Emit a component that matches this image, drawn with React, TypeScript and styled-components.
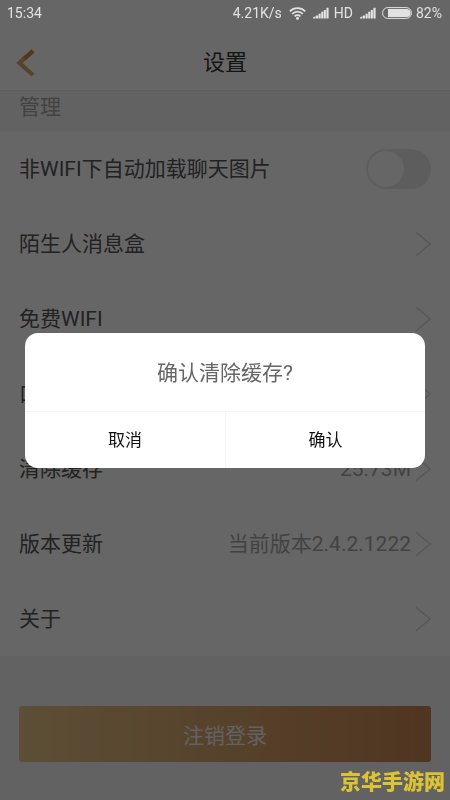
import React from "react";
import styled, { createGlobalStyle } from "styled-components";

const GlobalStyle = createGlobalStyle`
  * { box-sizing: border-box; }
  body {
    margin: 0;
    background: #f5f5f5;
    font-family: Roboto, "Noto Sans CJK SC", sans-serif;
  }
  button, input { font-family: inherit; margin: 0; }
`;

const Page = styled.div`
  min-height: 100vh;
  display: flex;
  flex-direction: column;
`;

const TopBar = styled.header`
  padding-top: 35px;
  background: #fff;
  border-bottom: 1px solid #e9e9e9;
`;

const TitleRow = styled.div`
  display: grid;
  grid-template-columns: 56px 1fr 56px;
  align-items: center;
  height: 55px;
`;

const Title = styled.h1`
  margin: 0;
  font-size: 22px;
  line-height: 32px;
  font-weight: 400;
  text-align: center;
  color: #333;
`;

const BackButton = styled.button`
  display: flex;
  padding: 0 0 0 16px;
  border: 0;
  background: none;
`;

const StatusBar = styled.div`
  position: fixed;
  inset: 0 0 auto 0;
  z-index: 3;
  display: flex;
  align-items: center;
  justify-content: space-between;
  height: 26px;
  padding: 0 8px 0 7px;
  font-size: 14px;
  line-height: 16px;
  color: #e2e2e2;
`;

const StatusGroup = styled.div<{ $gap: number }>`
  display: flex;
  align-items: center;
  gap: ${(p) => p.$gap}px;
`;

const SectionLabel = styled.h2`
  margin: 0;
  height: 39px;
  padding: 0 19px;
  font-size: 21px;
  line-height: 32px;
  font-weight: 400;
  color: #a6a6a6;
`;

const List = styled.ul`
  margin: 0;
  padding: 0;
  list-style: none;
  background: #fff;
  border-top: 1px solid #f0f0f0;
`;

const rowLayout = `
  display: flex;
  align-items: center;
  width: 100%;
  height: 75px;
  padding: 0 19px;
  border: 0;
  background: none;
  font-size: 21px;
  line-height: 30px;
  color: #555;
  text-align: left;
`;

const RowButton = styled.button`
  ${rowLayout}
`;

const RowLabel = styled.label`
  ${rowLayout}
`;

const RowText = styled.span`
  flex: 1;
`;

const RowValue = styled.span`
  margin-right: 4px;
  color: #a6a6a6;
`;

const Toggle = styled.input`
  appearance: none;
  display: flex;
  align-items: center;
  width: 65px;
  height: 40px;
  padding: 2px;
  border-radius: 20px;
  background: #e9e9e9;

  &::before {
    content: "";
    width: 36px;
    height: 36px;
    border-radius: 50%;
    background: #fff;
  }
  &:checked {
    justify-content: flex-end;
    background: #d49a5c;
  }
`;

const LogoutButton = styled.button`
  margin: 50px 19px 37px;
  height: 56px;
  padding: 3px 0 0;
  border: 0;
  border-radius: 3px;
  background: linear-gradient(90deg, #e8c488, #c88650);
  font-size: 21px;
  line-height: 30px;
  color: #f4f4f4;
`;

const Watermark = styled.div`
  position: fixed;
  right: 5px;
  bottom: 3px;
  z-index: 3;
  font-size: 21px;
  line-height: 30px;
  font-weight: 900;
  color: #dcc336;
`;

const Backdrop = styled.div`
  position: fixed;
  inset: 0;
  z-index: 2;
  display: flex;
  align-items: center;
  justify-content: center;
  padding: 0 25px;
  background: rgba(0, 0, 0, 0.6);
`;

const Dialog = styled.div`
  width: 100%;
  border-radius: 13px;
  background: #fff;
  overflow: hidden;
`;

const DialogMessage = styled.p`
  margin: 0;
  padding: 25px 16px 23px;
  font-size: 21px;
  line-height: 30px;
  text-align: center;
  color: #666;
`;

const DialogActions = styled.div`
  display: grid;
  grid-template-columns: 1fr 1fr;
  border-top: 1px solid #f2f2f2;
`;

const DialogButton = styled.button`
  height: 56px;
  padding: 0;
  border: 0;
  background: none;
  font-size: 17px;
  line-height: 24px;
  color: #111;

  & + & { border-left: 1px solid #f5f5f5; }
`;

const Wifi = () => (
  <svg width="17" height="13" viewBox="0 0 17 13" fill="none" stroke="currentColor" strokeWidth="1.7" aria-hidden="true">
    <path d="M0.8 4.4C5 .1 12 .1 16.2 4.4M3.2 6.9C6.2 3.9 10.8 3.9 13.8 6.9M5.6 9.3C7.2 7.7 9.8 7.7 11.4 9.3" />
    <circle cx="8.5" cy="11.2" r="1.5" fill="currentColor" stroke="none" />
  </svg>
);

const Signal = () => (
  <svg width="16" height="12" viewBox="0 0 16 12" fill="currentColor" aria-hidden="true">
    <path d="M0 10.4 2.4 9.2V11.6H0zM2.9 8.4H5.1V11.6H2.9zM5.6 6.7H7.7V11.6H5.6zM8.2 4.8H10.3V11.6H8.2zM10.8 2.9H12.9V11.6H10.8zM13.4.7H15.6V11.6H13.4z" />
  </svg>
);

const Battery = () => (
  <svg width="30" height="12" viewBox="0 0 30 12" aria-hidden="true">
    <rect x=".6" y=".6" width="28.8" height="10.8" rx="5.2" fill="none" stroke="currentColor" strokeWidth="1" />
    <path d="M6 1.9H25Q28.6 2.4 28.6 6T25 10.1H6z" fill="currentColor" />
  </svg>
);

const Chevron = () => (
  <svg width="16" height="26" viewBox="0 0 16 26" fill="none" stroke="#dadada" strokeWidth="1.6" aria-hidden="true">
    <path d="M.8 1 15 13 .8 25" />
  </svg>
);

const BackArrow = () => (
  <svg width="20" height="28" viewBox="0 0 20 28" fill="none" strokeWidth="4.2" aria-hidden="true">
    <path d="M17 2 3.4 14" stroke="#d08a50" />
    <path d="M10 7.8 3.4 14 17 26" stroke="#d8a866" />
    <path d="M17 2 8.5 9.5" stroke="#d08a50" />
  </svg>
);

const rows = [
  { label: "陌生人消息盒" },
  { label: "免费WIFI" },
  { label: "口令" },
  { label: "清除缓存", value: "25.73M" },
  { label: "版本更新", value: "当前版本2.4.2.1222" },
  { label: "关于" },
];

export default function App() {
  return (
    <>
      <GlobalStyle />
      <StatusBar>
        <span>15:34</span>
        <StatusGroup $gap={7}>
          <span>4.21K/s</span>
          <Wifi />
          <StatusGroup $gap={5}>
            <Signal />
            <span>HD</span>
          </StatusGroup>
          <StatusGroup $gap={6}>
            <Signal />
            <StatusGroup $gap={4}>
              <Battery />
              <span>82%</span>
            </StatusGroup>
          </StatusGroup>
        </StatusGroup>
      </StatusBar>
      <Page>
        <TopBar>
          <TitleRow>
            <BackButton aria-label="返回"><BackArrow /></BackButton>
            <Title>设置</Title>
          </TitleRow>
        </TopBar>
        <main>
          <SectionLabel>管理</SectionLabel>
          <List>
            <li>
              <RowLabel>
                <RowText>非WIFI下自动加载聊天图片</RowText>
                <Toggle type="checkbox" />
              </RowLabel>
            </li>
            {rows.map((row) => (
              <li key={row.label}>
                <RowButton>
                  <RowText>{row.label}</RowText>
                  {row.value && <RowValue>{row.value}</RowValue>}
                  <Chevron />
                </RowButton>
              </li>
            ))}
          </List>
        </main>
        <LogoutButton>注销登录</LogoutButton>
      </Page>
      <Backdrop>
        <Dialog role="dialog" aria-modal="true" aria-labelledby="dialog-message">
          <DialogMessage id="dialog-message">确认清除缓存?</DialogMessage>
          <DialogActions>
            <DialogButton>取消</DialogButton>
            <DialogButton>确认</DialogButton>
          </DialogActions>
        </Dialog>
      </Backdrop>
      <Watermark>京华手游网</Watermark>
    </>
  );
}
